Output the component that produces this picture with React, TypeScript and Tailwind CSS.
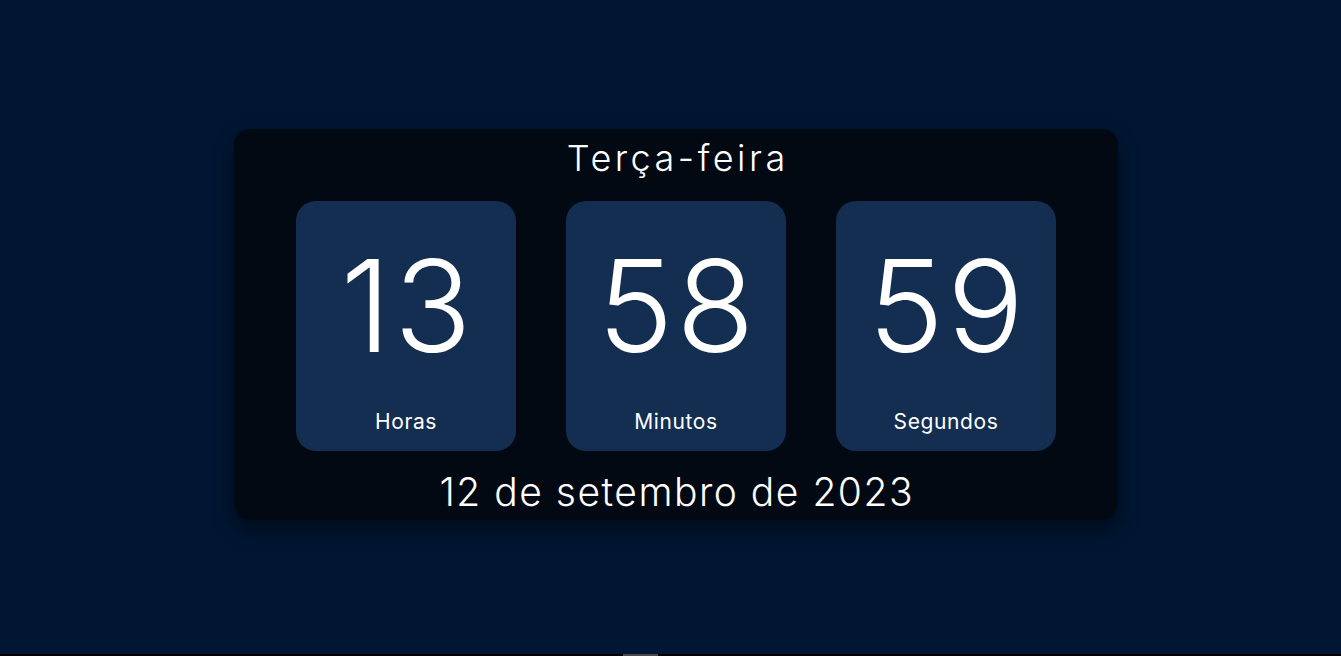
import { FunctionComponent } from "react";

type TimeBoxType = {
  value: string;
  label: string;
};

const TimeBox: FunctionComponent<TimeBoxType> = ({ value, label }) => {
  return (
    <div className="w-[220px] h-[250px] rounded-[20px] bg-[#132e50] flex flex-col items-center">
      <div className="mt-[41px] h-[128px] leading-[128px] text-[128px] font-light tracking-[3px] pl-[3px]">
        {value}
      </div>
      <div className="mt-[38px] text-[21px] leading-[28px] tracking-[0.6px]">{label}</div>
    </div>
  );
};

const App: FunctionComponent = () => {
  return (
    <div className="w-full h-[656px] bg-[#011632] flex flex-col text-white font-['Inter','Noto_Sans',sans-serif]">
      <div className="flex-1 flex items-center justify-center pl-[11px] pb-[5px]">
        <div className="w-[884px] rounded-[16px] bg-[#020913] shadow-[0_10px_20px_rgba(0,0,0,0.45)] flex flex-col items-center pt-[1px]">
          <div className="text-[36px] leading-[56px] font-light tracking-[3.5px] pl-[3.5px]">
            Terça-feira
          </div>
          <div className="mt-[15px] flex flex-row gap-[50px]">
            <TimeBox value="13" label="Horas" />
            <TimeBox value="58" label="Minutos" />
            <TimeBox value="59" label="Segundos" />
          </div>
          <div className="mt-[13px] text-[39px] leading-[56px] font-light tracking-[1.5px] pl-[1.5px]">
            12 de setembro de 2023
          </div>
        </div>
      </div>
      <div className="h-[2px] bg-black flex flex-row">
        <div className="ml-[623px] w-[35px] bg-[#4a4a4a]" />
      </div>
    </div>
  );
};

export default App;
